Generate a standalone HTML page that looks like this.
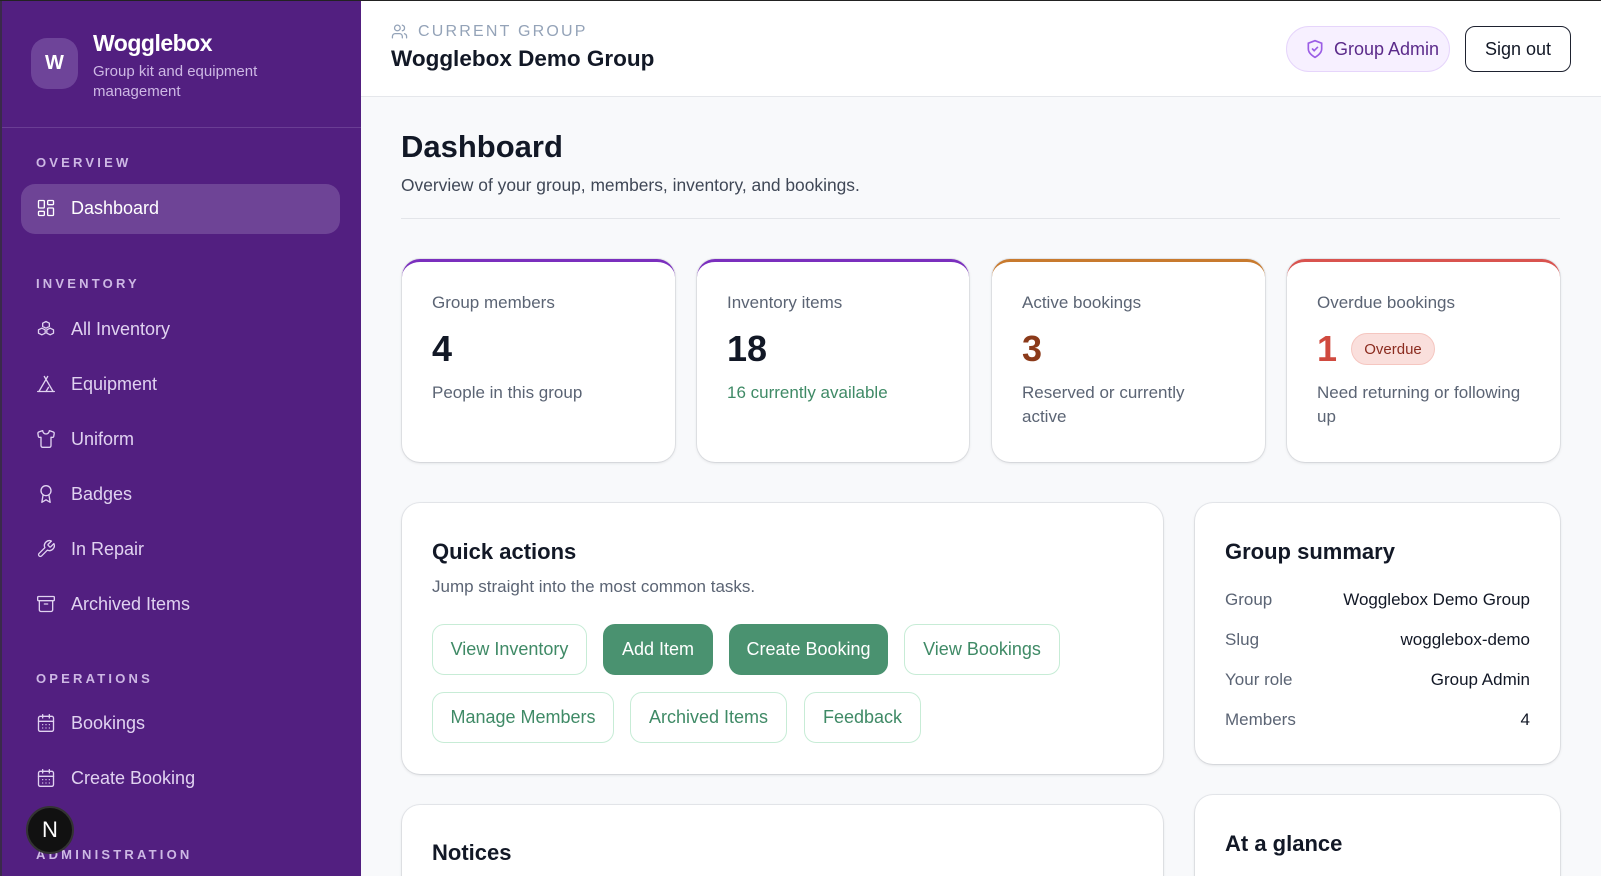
<!DOCTYPE html>
<html style="overflow:hidden;height:876px"><head><meta charset="utf-8"><style>
*{box-sizing:border-box;margin:0;padding:0}
body{width:1601px;height:876px;overflow:hidden;font-family:"Liberation Sans",sans-serif;background:#f8f9fb;position:relative;border-top:1px solid #222}
.a{position:absolute}
.sb{left:0;top:0;width:361px;height:876px;background:#521f80;border-left:2px solid #3a2a4a}
.sec{color:#cdb8e4;font-size:13px;font-weight:bold;letter-spacing:3.2px;left:34px}
.nav{left:34px;color:#e0d2f0;font-size:18px;display:flex;align-items:center;height:24px}
.nav svg{width:20px;height:20px;margin-right:15px;stroke:#e0d2f0;fill:none;stroke-width:1.6;stroke-linecap:round;stroke-linejoin:round}
.card{background:#fff;border-radius:18px;box-shadow:0 1px 3px rgba(0,0,0,.12),0 0 0 1px #e8eaee}
.lbl{font-size:17px;color:#5b6474}
.num{font-size:36px;font-weight:bold;color:#121826}
.desc{font-size:17px;color:#5b6474;line-height:24px}
.btn{height:51px;border-radius:12px;border:1px solid #c7ecd6;color:#3f8a66;font-size:18px;display:flex;align-items:center;justify-content:center;background:#fff;white-space:nowrap}
.btn.g{background:#4a9270;border-color:#4a9270;color:#fff}
.row{left:30px;right:30px;display:flex;justify-content:space-between;font-size:17px}
.row span:first-child{color:#5b6474}.row span:last-child{color:#121826}
</style></head><body>
<div class="a sb">
 <div class="a" style="left:29px;top:37px;width:47px;height:51px;border-radius:16px;background:#6e4499;color:#fff;font-weight:bold;font-size:20px;display:flex;align-items:center;justify-content:center">W</div>
 <div class="a" style="left:91px;top:29px;color:#fff;font-weight:bold;font-size:23px;letter-spacing:-.5px">Wogglebox</div>
 <div class="a" style="left:91px;top:61px;color:#cdb8e4;font-size:15px;line-height:20px;width:200px">Group kit and equipment management</div>
 <div class="a" style="left:0;top:126px;width:359px;height:1px;background:#6a3d94"></div>
 <div class="a sec" style="top:154px">OVERVIEW</div>
 <div class="a" style="left:19px;top:183px;width:319px;height:50px;border-radius:14px;background:#6e4496"></div>
 <div class="a nav" style="top:195px;color:#fff"><svg viewBox="0 0 24 24" style="stroke:#fff"><rect x="3" y="3" width="7" height="9" rx="1"/><rect x="14" y="3" width="7" height="5" rx="1"/><rect x="14" y="12" width="7" height="9" rx="1"/><rect x="3" y="16" width="7" height="5" rx="1"/></svg>Dashboard</div>
 <div class="a sec" style="top:275px">INVENTORY</div>
 <div class="a nav" style="top:316px"><svg viewBox="0 0 24 24"><path d="M12 3l4 2v4l-4 2-4-2V5z"/><path d="M7 11l4 2v4l-4 2-4-2v-4z"/><path d="M17 11l4 2v4l-4 2-4-2v-4z"/></svg>All Inventory</div>
 <div class="a nav" style="top:371px"><svg viewBox="0 0 24 24"><path d="M3.5 21L14 3M20.5 21L10 3M2 21h20M12 21l3-5"/></svg>Equipment</div>
 <div class="a nav" style="top:426px"><svg viewBox="0 0 24 24"><path d="M20.4 3.5L16 2a4 4 0 01-8 0L3.6 3.5a2 2 0 00-1.3 2.2l.6 3.5a1 1 0 001 .8H6v10c0 1.1.9 2 2 2h8a2 2 0 002-2V10h2.2a1 1 0 001-.8l.6-3.5a2 2 0 00-1.4-2.2z"/></svg>Uniform</div>
 <div class="a nav" style="top:481px"><svg viewBox="0 0 24 24"><circle cx="12" cy="8" r="6"/><path d="M15.5 12.9L17 22l-5-3-5 3 1.5-9.1"/></svg>Badges</div>
 <div class="a nav" style="top:536px"><svg viewBox="0 0 24 24"><path d="M14.7 6.3a1 1 0 000 1.4l1.6 1.6a1 1 0 001.4 0l3.8-3.8a6 6 0 01-7.9 7.9l-6.9 6.9a2.1 2.1 0 01-3-3l6.9-6.9a6 6 0 017.9-7.9z"/></svg>In Repair</div>
 <div class="a nav" style="top:591px"><svg viewBox="0 0 24 24"><rect x="2" y="3" width="20" height="5" rx="1"/><path d="M4 8v11a2 2 0 002 2h12a2 2 0 002-2V8M10 12h4"/></svg>Archived Items</div>
 <div class="a sec" style="top:670px">OPERATIONS</div>
 <div class="a nav" style="top:710px"><svg viewBox="0 0 24 24"><rect x="3" y="4" width="18" height="18" rx="2"/><path d="M16 2v4M8 2v4M3 10h18M8 14h.01M12 14h.01M16 14h.01M8 18h.01M12 18h.01M16 18h.01"/></svg>Bookings</div>
 <div class="a nav" style="top:765px"><svg viewBox="0 0 24 24"><rect x="3" y="4" width="18" height="18" rx="2"/><path d="M16 2v4M8 2v4M3 10h18M8 14h.01M12 14h.01M16 14h.01M8 18h.01M12 18h.01M16 18h.01"/></svg>Create Booking</div>
 <div class="a sec" style="top:846px">ADMINISTRATION</div>
 <div class="a" style="left:24px;top:805px;width:48px;height:48px;border-radius:50%;background:#111;border:2px solid #333;color:#fff;font-size:22px;display:flex;align-items:center;justify-content:center">N</div>
</div>
<div class="a" style="left:361px;top:0;width:1240px;height:96px;background:#fff;border-bottom:1px solid #e5e7eb"></div>
<svg class="a" style="left:391px;top:22px" width="17" height="17" viewBox="0 0 24 24" fill="none" stroke="#94a3b8" stroke-width="1.8" stroke-linecap="round"><path d="M16 21v-2a4 4 0 00-4-4H6a4 4 0 00-4 4v2"/><circle cx="9" cy="7" r="4"/><path d="M22 21v-2a4 4 0 00-3-3.9M16 3.1a4 4 0 010 7.8"/></svg>
<div class="a" style="left:418px;top:22px;font-size:16px;letter-spacing:2.2px;color:#94a3b8">CURRENT GROUP</div>
<div class="a" style="left:391px;top:45px;font-size:22.5px;font-weight:bold;color:#121826">Wogglebox Demo Group</div>
<div class="a" style="left:1286px;top:25px;width:164px;height:46px;border-radius:23px;background:#f7f0ff;border:1px solid #e6d5fb;display:flex;align-items:center;padding-left:18px;color:#5b2a8a;font-size:18px;white-space:nowrap"><svg width="20" height="20" viewBox="0 0 24 24" fill="none" stroke="#9b5de5" stroke-width="2" stroke-linecap="round" style="margin-right:9px"><path d="M12 22s8-4 8-10V5l-8-3-8 3v7c0 6 8 10 8 10z"/><path d="M9 12l2 2 4-4"/></svg>Group Admin</div>
<div class="a" style="left:1465px;top:25px;width:106px;height:46px;border-radius:10px;border:1px solid #1e2230;background:#fff;display:flex;align-items:center;justify-content:center;font-size:18px;color:#121826">Sign out</div>
<div class="a" style="left:401px;top:128px;font-size:31px;font-weight:bold;color:#121826">Dashboard</div>
<div class="a" style="left:401px;top:174px;font-size:17.4px;color:#3f4756">Overview of your group, members, inventory, and bookings.</div>
<div class="a" style="left:401px;top:217px;width:1159px;height:1px;background:#e3e5e9"></div>

<div class="a card" style="left:402px;top:258px;width:273px;height:203px;border-top:3px solid #7b2fbe">
 <div class="a lbl" style="left:30px;top:31px">Group members</div><div class="a num" style="left:30px;top:66px">4</div><div class="a desc" style="left:30px;top:119px">People in this group</div></div>
<div class="a card" style="left:697px;top:258px;width:272px;height:203px;border-top:3px solid #7b2fbe">
 <div class="a lbl" style="left:30px;top:31px">Inventory items</div><div class="a num" style="left:30px;top:66px">18</div><div class="a desc" style="left:30px;top:119px;color:#3f8a66">16 currently available</div></div>
<div class="a card" style="left:992px;top:258px;width:273px;height:203px;border-top:3px solid #c87a2e">
 <div class="a lbl" style="left:30px;top:31px">Active bookings</div><div class="a num" style="left:30px;top:66px;color:#8b3a1a">3</div><div class="a desc" style="left:30px;top:119px;width:210px">Reserved or currently active</div></div>
<div class="a card" style="left:1287px;top:258px;width:273px;height:203px;border-top:3px solid #d9534f">
 <div class="a lbl" style="left:30px;top:31px">Overdue bookings</div><div class="a num" style="left:30px;top:66px;color:#d04a3f">1</div>
 <div class="a" style="left:64px;top:71px;width:84px;height:32px;border-radius:16px;background:#fadfdc;border:1px solid #f5c6c0;color:#8b2b1f;font-size:15px;display:flex;align-items:center;justify-content:center">Overdue</div>
 <div class="a desc" style="left:30px;top:119px;width:220px">Need returning or following up</div></div>

<div class="a card" style="left:402px;top:502px;width:761px;height:271px">
 <div class="a" style="left:30px;top:36px;font-size:22px;font-weight:bold;color:#121826">Quick actions</div>
 <div class="a" style="left:30px;top:74px;font-size:17px;color:#5b6474">Jump straight into the most common tasks.</div>
</div>
<div class="a btn" style="left:432px;top:623px;width:155px">View Inventory</div>
<div class="a btn g" style="left:603px;top:623px;width:110px">Add Item</div>
<div class="a btn g" style="left:729px;top:623px;width:159px">Create Booking</div>
<div class="a btn" style="left:904px;top:623px;width:156px">View Bookings</div>
<div class="a btn" style="left:432px;top:691px;width:182px">Manage Members</div>
<div class="a btn" style="left:630px;top:691px;width:157px">Archived Items</div>
<div class="a btn" style="left:804px;top:691px;width:117px">Feedback</div>

<div class="a card" style="left:1195px;top:502px;width:365px;height:261px">
 <div class="a" style="left:30px;top:36px;font-size:22px;font-weight:bold;color:#121826">Group summary</div>
 <div class="a row" style="top:87px"><span>Group</span><span>Wogglebox Demo Group</span></div>
 <div class="a row" style="top:127px"><span>Slug</span><span>wogglebox-demo</span></div>
 <div class="a row" style="top:167px"><span>Your role</span><span>Group Admin</span></div>
 <div class="a row" style="top:207px"><span>Members</span><span>4</span></div>
</div>
<div class="a card" style="left:402px;top:804px;width:761px;height:90px">
 <div class="a" style="left:30px;top:35px;font-size:22px;font-weight:bold;color:#121826">Notices</div></div>
<div class="a card" style="left:1195px;top:794px;width:365px;height:100px">
 <div class="a" style="left:30px;top:36px;font-size:22px;font-weight:bold;color:#121826">At a glance</div></div>
</body></html>
